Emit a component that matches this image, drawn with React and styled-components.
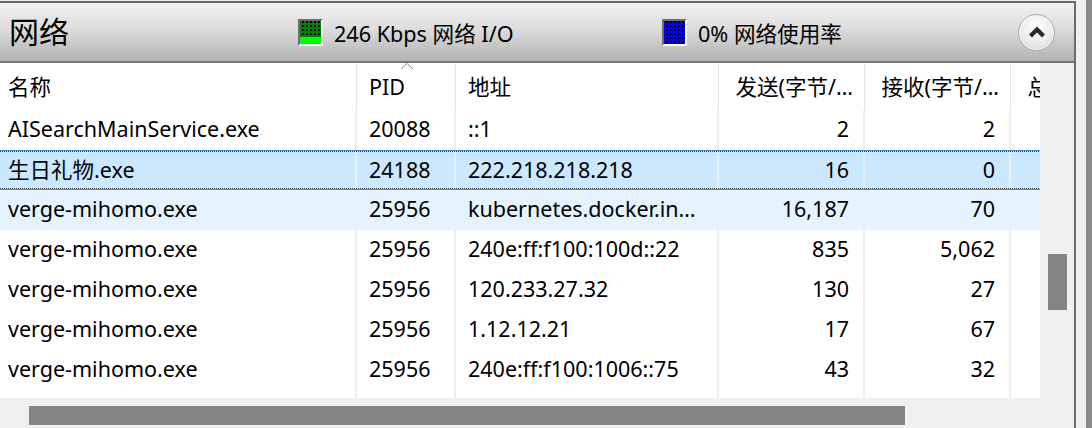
import React from 'react';
import styled, { createGlobalStyle } from 'styled-components';

const GlobalStyle = createGlobalStyle`
  html, body {
    margin: 0;
    padding: 0;
    background: #f0f0f0;
  }
  body {
    font-family: "Noto Sans", "Noto Sans CJK SC", sans-serif;
    color: #000;
    overflow: hidden;
  }
`;

const columns = [
  { key: 'name', label: '名称', width: 357, align: 'left', pad: 8 },
  { key: 'pid', label: 'PID', width: 99, align: 'left', pad: 12 },
  { key: 'addr', label: '地址', width: 263, align: 'left', pad: 12 },
  { key: 'sent', label: '发送(字节/…', width: 146, align: 'right', pad: 14 },
  { key: 'recv', label: '接收(字节/…', width: 146, align: 'right', pad: 14 },
  { key: 'total', label: '总计(字节/…', width: 146, align: 'right', pad: 14 },
];

const rows = [
  { name: 'AISearchMainService.exe', pid: '20088', addr: '::1', sent: '2', recv: '2' },
  { name: '生日礼物.exe', pid: '24188', addr: '222.218.218.218', sent: '16', recv: '0', state: 'selected' },
  { name: 'verge-mihomo.exe', pid: '25956', addr: 'kubernetes.docker.in…', sent: '16,187', recv: '70', state: 'hover' },
  { name: 'verge-mihomo.exe', pid: '25956', addr: '240e:ff:f100:100d::22', sent: '835', recv: '5,062' },
  { name: 'verge-mihomo.exe', pid: '25956', addr: '120.233.27.32', sent: '130', recv: '27' },
  { name: 'verge-mihomo.exe', pid: '25956', addr: '1.12.12.21', sent: '17', recv: '67' },
  { name: 'verge-mihomo.exe', pid: '25956', addr: '240e:ff:f100:1006::75', sent: '43', recv: '32' },
];

const Screen = styled.div`
  display: flex;
  width: 1092px;
  height: 428px;
  overflow: hidden;
`;

const Panel = styled.div`
  width: 1074px;
  margin-top: 1px;
  border-top: 2px solid #6b6b6b;
  border-right: 2px solid #6b6b6b;
  display: flex;
  flex-direction: column;
`;

const Spacer = styled.div`
  width: 10px;
`;

const NeighbourEdge = styled.div`
  width: 6px;
  background: #8a8a8a;
`;

const HeaderBar = styled.div`
  height: 58px;
  border-bottom: 2px solid #777;
  display: flex;
  align-items: center;
  background: linear-gradient(#f3f3f3, #dcdcdc 45%, #b3b3b3);
`;

const Title = styled.div`
  width: 298px;
  box-sizing: border-box;
  padding-left: 9px;
  font-size: 30px;
  line-height: 1;
`;

const Legend = styled.div`
  display: flex;
  align-items: center;
  width: ${p => (p.$width ? `${p.$width}px` : 'auto')};
  flex: ${p => (p.$width ? 'none' : '1')};
  font-size: 21.6px;
`;

const Swatch = styled.div`
  width: 21px;
  height: 23px;
  margin-right: 11px;
  border-style: solid;
  border-width: 2px;
  border-color: #6e6e6e #fff #fff #6e6e6e;
  background:
    ${p => (p.$fill ? `linear-gradient(transparent ${100 - p.$fill}%, ${p.$bright} ${100 - p.$fill}%),` : '')}
    conic-gradient(#000 0 25%, transparent 0 100%) 0 0 / 4px 4px,
    ${p => p.$color};
`;

const CollapseButton = styled.button`
  width: 37px;
  height: 37px;
  margin-right: 19px;
  padding: 0;
  border-radius: 50%;
  border: 1px solid #a9a9a9;
  background: radial-gradient(circle at 50% 35%, #ffffff, #ececec 55%, #d2d2d2);
  box-shadow: inset 0 0 0 1px #f8f8f8;
  display: flex;
  align-items: center;
  justify-content: center;
`;

const Body = styled.div`
  display: grid;
  grid-template-columns: 1040px 34px;
  grid-template-rows: 335px 30px;
`;

const Viewport = styled.div`
  background: #fff;
  overflow: hidden;
  display: flex;
  flex-direction: column;
`;

const HeaderRow = styled.div`
  display: flex;
  height: 47px;
  flex: none;
  width: 1157px;
`;

const HeaderCell = styled.div`
  position: relative;
  flex: none;
  box-sizing: border-box;
  width: ${p => p.$width}px;
  padding: ${p => (p.$align === 'right' ? `0 11px 0 0` : `0 0 0 ${p.$pad}px`)};
  text-align: ${p => p.$align};
  border-right: 1px solid #e5e5e5;
  font-size: 21.5px;
  line-height: 47px;
  white-space: nowrap;
  overflow: hidden;
`;

const SortArrow = styled.svg`
  position: absolute;
  left: 43px;
  top: -1px;
`;

const Row = styled.div`
  position: relative;
  display: flex;
  flex: ${p => (p.$filler ? '1' : 'none')};
  height: ${p => (p.$filler ? 'auto' : '40px')};
  width: 1157px;
  box-sizing: border-box;
  background: ${p =>
    p.$state === 'selected' ? '#cce8ff' : p.$state === 'hover' ? '#e5f3ff' : '#fff'};
  ${p => p.$state === 'selected' && `
    border-top: 1px solid #3b8ad6;
    border-bottom: 1px solid #3b8ad6;
    &::after {
      content: '';
      position: absolute;
      left: 0;
      right: 0;
      top: 0;
      bottom: 0;
      border-top: 1px dotted #3a3a3a;
      border-bottom: 1px dotted #3a3a3a;
      pointer-events: none;
    }
  `}
`;

const Cell = styled.div`
  flex: none;
  box-sizing: border-box;
  width: ${p => p.$width}px;
  padding: ${p => (p.$align === 'right' ? `0 ${p.$pad}px 0 0` : `0 0 0 ${p.$pad}px`)};
  text-align: ${p => p.$align};
  border-right: 2px solid #e6f0fb;
  font-size: 21.5px;
  line-height: 38px;
  white-space: nowrap;
  overflow: hidden;
`;

const VTrack = styled.div`
  background: #f0f0f0;
`;

const VThumb = styled.div`
  width: 19px;
  height: 56px;
  margin: 191px 0 0 8px;
  background: #858585;
`;

const HTrack = styled.div`
  background: #f0f0f0;
  padding: 8px 0 0 29px;
  box-sizing: border-box;
`;

const HThumb = styled.div`
  width: 876px;
  height: 19px;
  background: #858585;
`;

const Corner = styled.div`
  background: #f0f0f0;
`;

export default function App() {
  return (
    <>
      <GlobalStyle />
      <Screen>
        <Panel>
          <HeaderBar>
            <Title>网络</Title>
            <Legend $width={364}>
              <Swatch $color="#008000" $bright="#00ff00" $fill={30} />
              246 Kbps 网络 I/O
            </Legend>
            <Legend>
              <Swatch $color="#0000ff" />
              0% 网络使用率
            </Legend>
            <CollapseButton aria-label="折叠">
              <svg width="18" height="12" viewBox="0 0 18 12">
                <path d="M2.5 10 L9 3.5 L15.5 10" fill="none" stroke="#2a2a2a" strokeWidth="4.2" />
              </svg>
            </CollapseButton>
          </HeaderBar>
          <Body>
            <Viewport>
              <HeaderRow>
                {columns.map(c => (
                  <HeaderCell key={c.key} $width={c.width} $align={c.align} $pad={c.pad}>
                    {c.key === 'pid' && (
                      <SortArrow width="14" height="8" viewBox="0 0 14 8">
                        <path d="M1 7 L7 1.5 L13 7" fill="none" stroke="#8a8a8a" strokeWidth="1" />
                      </SortArrow>
                    )}
                    {c.label}
                  </HeaderCell>
                ))}
              </HeaderRow>
              {rows.map((r, i) => (
                <Row key={i} $state={r.state}>
                  {columns.map(c => (
                    <Cell key={c.key} $width={c.width} $align={c.align} $pad={c.pad}>
                      {r[c.key] || ''}
                    </Cell>
                  ))}
                </Row>
              ))}
              <Row $filler>
                {columns.map(c => (
                  <Cell key={c.key} $width={c.width} $align={c.align} $pad={c.pad} />
                ))}
              </Row>
            </Viewport>
            <VTrack>
              <VThumb />
            </VTrack>
            <HTrack>
              <HThumb />
            </HTrack>
            <Corner />
          </Body>
        </Panel>
        <Spacer />
        <NeighbourEdge />
      </Screen>
    </>
  );
}
